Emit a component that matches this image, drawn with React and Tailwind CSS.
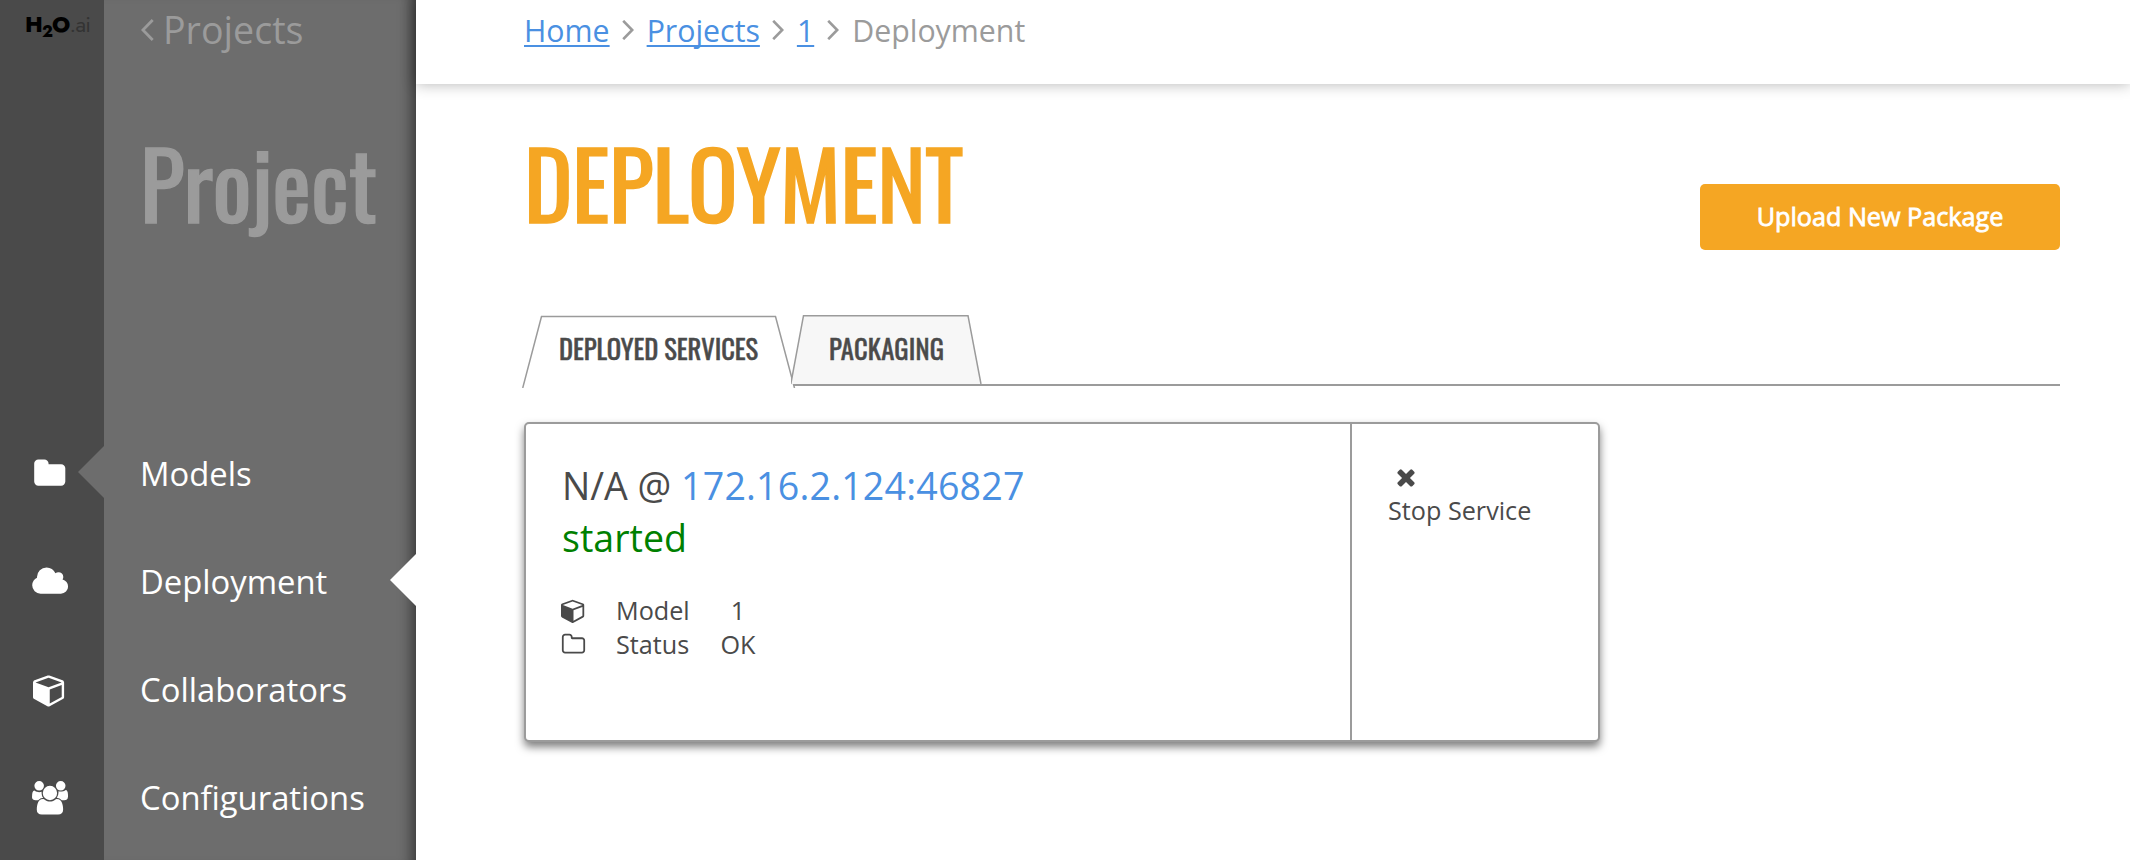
import React from "react";

const ICONS = {
  folder: { w: 1792, d: "M1728 608v704q0 92-66 158t-158 66h-1216q-92 0-158-66t-66-158v-960q0-92 66-158t158-66h320q92 0 158 66t66 158v32h672q92 0 158 66t66 158z" },
  folderOpen: { w: 1792, d: "M1600 1312v-704q0-40-28-68t-68-28h-704q-40 0-68-28t-28-68v-64q0-40-28-68t-68-28h-320q-40 0-68 28t-28 68v960q0 40 28 68t68 28h1216q40 0 68-28t28-68zm128-704v704q0 92-66 158t-158 66h-1216q-92 0-158-66t-66-158v-960q0-92 66-158t158-66h320q92 0 158 66t66 158v32h672q92 0 158 66t66 158z" },
  cloud: { w: 2048, d: "M1984 1152q0 159-112.5 271.5t-271.5 112.5h-1088q-185 0-316.5-131.5t-131.5-316.5q0-132 71-241.5t187-163.5q-2-28-2-43 0-212 150-362t362-150q158 0 286.5 88t187.5 230q70-62 166-62 106 0 181 75t75 181q0 75-41 138 129 30 213 134.5t84 239.5z" },
  cube: { w: 1792, d: "M896 1629l640-349v-636l-640 233v752zm-64-865l698-254-698-254-698 254zm832-252v768q0 35-18 65t-49 47l-704 384q-28 16-61 16t-61-16l-704-384q-31-17-49-47t-18-65v-768q0-40 23-73t61-47l704-256q22-8 44-8t44 8l704 256q38 14 61 47t23 73z" },
  group: { w: 1920, d: "M593 896q-162 5-265 128h-134q-82 0-138-40.5t-56-118.5q0-353 124-353 6 0 43.5 21t97.5 42.5 119 21.5q67 0 133-23-5 37-5 66 0 159 90 287zm1071 637q0 120-73 189.5t-194 69.5h-874q-121 0-194-69.5t-73-189.5q0-53 3.5-103.5t14-109 26.5-108.5 43-97.5 62-81 85.5-53.5 111.5-20q10 0 43 21.5t73 48 107 48 135 21.5 135-21.5 107-48 73-48 43-21.5q61 0 111.5 20t85.5 53.5 62 81 43 97.5 26.5 108.5 14 109 3.5 103.5zm-1024-1277q0 106-75 181t-181 75-181-75-75-181 75-181 181-75 181 75 75 181zm704 384q0 159-112.5 271.5t-271.5 112.5-271.5-112.5-112.5-271.5 112.5-271.5 271.5-112.5 271.5 112.5 112.5 271.5zm576 225q0 78-56 118.5t-138 40.5h-134q-103-123-265-128 90-128 90-287 0-29-5-66 66 23 133 23 59 0 119-21.5t97.5-42.5 43.5-21q124 0 124 353zm-128-609q0 106-75 181t-181 75-181-75-75-181 75-181 181-75 181 75 75 181z" },
  times: { w: 1792, d: "M1490 1322q0 40-28 68l-136 136q-28 28-68 28t-68-28l-294-294-294 294q-28 28-68 28t-68-28l-136-136q-28-28-28-68t28-68l294-294-294-294q-28-28-28-68t28-68l136-136q28-28 68-28t68 28l294 294 294-294q28-28 68-28t68 28l136 136q28 28 28 68t-28 68l-294 294 294 294q28 28 28 68z" },
};

function Icon({ name, className }) {
  const { w, d } = ICONS[name];
  return (
    <svg viewBox={`0 0 ${w} 1792`} className={className} fill="currentColor">
      <path d={d} />
    </svg>
  );
}

function Chevron({ className }) {
  return (
    <svg viewBox="0 0 12 20" className={className} fill="none" stroke="#9b9b9b" strokeWidth="2.6">
      <path d="M1.2 0.8L10.2 10L1.2 19.2" />
    </svg>
  );
}

const RAIL = [
  { icon: "folder", cls: "h-[33.5px] w-[33.5px]", active: true },
  { icon: "cloud", cls: "h-[33.5px] w-[38.3px]" },
  { icon: "cube", cls: "h-[33.5px] w-[33.5px]" },
  { icon: "group", cls: "h-[33.5px] w-[35.9px]" },
];
const MENU = ["Models", "Deployment", "Collaborators", "Configurations"];

export default function App() {
  return (
    <div className="flex h-[860px] w-[2130px] overflow-hidden bg-white font-['Open_Sans','Noto_Sans',sans-serif] text-[#4a4a4a]">
      <aside className="flex w-[104px] shrink-0 flex-col bg-[#4a4a4a]">
        <div className="flex h-[420px] items-start pt-[8px] pl-[25px] font-['Jost','Montserrat','Lato',sans-serif] text-[22px] leading-[32px] tracking-[-0.8px] text-black">
          <span className="font-extrabold">H</span>
          <span className="pt-[8px] text-[16px] font-extrabold">2</span>
          <span className="font-extrabold">O</span>
          <span className="text-[#333]">.ai</span>
        </div>
        {RAIL.map((r) => (
          <div key={r.icon} className="relative flex h-[108px] shrink-0 items-center justify-center pr-[4px] text-white">
            <Icon name={r.icon} className={r.cls} />
            {r.active && (
              <svg viewBox="0 0 26 52" className="absolute top-[26px] right-0 h-[52px] w-[26px]" fill="#6d6d6d">
                <path d="M26 0L0 26L26 52Z" />
              </svg>
            )}
          </div>
        ))}
      </aside>

      <nav className="flex w-[312px] shrink-0 flex-col bg-[#6d6d6d] shadow-[inset_-16px_0_14px_-12px_rgba(0,0,0,0.5)]">
        <div className="flex h-[60px] items-center pl-[37px] text-[37.6px] text-[#9b9b9b]">
          <Chevron className="mr-[9px] h-[22px] w-[13px] rotate-180" />
          Projects
        </div>
        <h2 className="h-[360px] pt-[53px] pl-[36px] font-['Oswald','Roboto',sans-serif] text-[92px] leading-[138px] font-normal tracking-[-0.1px] text-[#9b9b9b] [-webkit-text-stroke:1.5px_#9b9b9b]">Project</h2>
        {MENU.map((t) => (
          <div key={t} className="relative flex h-[108px] shrink-0 items-center pl-[36px] text-[32.8px] leading-[48px] text-white">
            {t}
            {t === "Deployment" && (
              <svg viewBox="0 0 26 52" className="absolute top-[26px] right-0 h-[52px] w-[26px]" fill="#fff">
                <path d="M26 0L0 26L26 52Z" />
              </svg>
            )}
          </div>
        ))}
      </nav>

      <main className="flex min-w-0 flex-1 flex-col">
        <header className="flex h-[84px] shrink-0 items-start gap-[12px] pt-[10px] pl-[108px] text-[30.3px] leading-[41px] text-[#9b9b9b] shadow-[0_0_14px_rgba(0,0,0,0.3)]">
          <a className="text-[#4a90e2] underline decoration-2 underline-offset-[3px] [text-decoration-skip-ink:none]">Home</a>
          <Chevron className="mt-[10px] h-[20px] w-[12px]" />
          <a className="ml-[1px] text-[#4a90e2] underline decoration-2 underline-offset-[3px] [text-decoration-skip-ink:none]">Projects</a>
          <Chevron className="mt-[10px] h-[20px] w-[12px]" />
          <a className="ml-[1px] text-[#4a90e2] underline decoration-2 underline-offset-[3px] [text-decoration-skip-ink:none]">1</a>
          <Chevron className="mt-[10px] ml-[1px] h-[20px] w-[12px]" />
          <span className="ml-[1px]">Deployment</span>
        </header>

        <div className="flex h-[231px] shrink-0 items-start justify-between pr-[70px] pl-[108px]">
          <h1 className="pt-[29px] font-['Oswald','Roboto',sans-serif] text-[92px] leading-[138px] font-normal tracking-[-0.5px] text-[#f5a623] [-webkit-text-stroke:1.5px_#f5a623]">DEPLOYMENT</h1>
          <button className="mt-[100px] h-[66px] w-[360px] rounded-[5px] bg-[#f5a623] text-[25.2px] text-white [-webkit-text-stroke:0.8px_white]">Upload New Package</button>
        </div>

        <div className="ml-[106px] flex h-[73px] w-[1538px] shrink-0 font-['Oswald','Roboto',sans-serif] text-[26.6px] leading-[40px] font-normal [-webkit-text-stroke:0.5px_#4a4a4a]">
          <div className="z-10 -mr-[5px] grid w-[274px]">
            <svg viewBox="0 0 274 73" className="col-start-1 row-start-1 h-[73px] w-[274px]" fill="#fff" stroke="#9b9b9b" strokeWidth="1.5">
              <path d="M0.7 73L19.5 1.5H253.5L272.5 73" />
            </svg>
            <span className="col-start-1 row-start-1 pt-[13px] pl-[37px] tracking-[-0.06px]">DEPLOYED SERVICES</span>
          </div>
          <div className="z-20 grid w-[192px]">
            <svg viewBox="0 0 192 73" className="col-start-1 row-start-1 h-[73px] w-[192px]" fill="#f7f7f7" stroke="#9b9b9b" strokeWidth="1.5">
              <path d="M-0.2 69L12.5 0.7H177L190 69" />
            </svg>
            <span className="col-start-1 row-start-1 pt-[13px] pl-[38px] tracking-[0.2px]">PACKAGING</span>
          </div>
          <div className="z-20 mt-[69px] -ml-[190px] h-[2px] w-[1267px] shrink-0 bg-[#9b9b9b]" />
        </div>

        <section className="mt-[34px] ml-[108px] flex h-[320px] w-[1076px] shrink-0 rounded-[5px] border-2 border-[#9b9b9b] bg-white text-[25.2px] leading-[34px] shadow-[0_5px_8px_rgba(0,0,0,0.5)]">
          <div className="flex w-[826px] shrink-0 flex-col border-r-2 border-[#9b9b9b] pt-[36px] pl-[36px]">
            <div className="text-[37.6px] leading-[52px]">
              N/A @ <a className="tracking-[0.18px] text-[#4a90e2]">172.16.2.124:46827</a>
            </div>
            <div className="text-[37.6px] leading-[52px] text-[#008000]">started</div>
            <div className="mt-[29px] flex h-[34px] items-center">
              <Icon name="cube" className="-ml-[1px] h-[25px] w-[25px]" />
              <span className="ml-[30px] w-[90px]">Model</span>
              <span className="w-[64px] text-center">1</span>
            </div>
            <div className="flex h-[34px] items-center">
              <Icon name="folderOpen" className="-ml-[1px] h-[25px] w-[25px]" />
              <span className="ml-[30px] w-[90px]">Status</span>
              <span className="w-[64px] text-center">OK</span>
            </div>
          </div>
          <div className="flex flex-col pt-[40px] pl-[36px]">
            <Icon name="times" className="ml-[5px] h-[26px] w-[26px]" />
            <span className="mt-[3px]">Stop Service</span>
          </div>
        </section>
      </main>
    </div>
  );
}
